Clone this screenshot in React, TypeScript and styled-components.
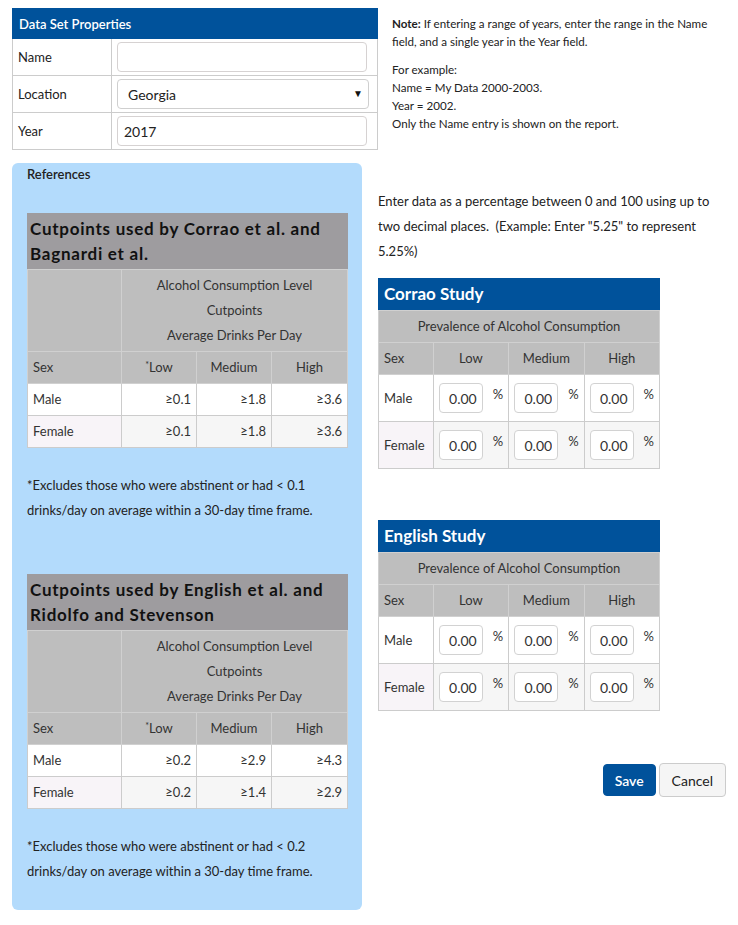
import React from "react";
import styled, { createGlobalStyle } from "styled-components";

const GlobalStyle = createGlobalStyle`
  body {
    margin: 0;
    background: #fff;
    font-family: Lato, "Open Sans", sans-serif;
    color: #222;
  }
`;

const BLUE = "#00529b";
const BORDER = "#cccccc";

const Page = styled.div`
  width: 714px;
  padding: 8px 12px 17px;
`;

const TopRow = styled.div`
  display: grid;
  grid-template-columns: 366px 1fr;
  gap: 14px;
`;

const BottomRow = styled.div`
  display: grid;
  grid-template-columns: 350px 1fr;
  gap: 16px;
  margin-top: 13px;
  align-items: start;
`;

const PropsTable = styled.table`
  width: 366px;
  border-collapse: collapse;
  font-size: 13px;
  th {
    background: ${BLUE};
    color: #fff;
    text-align: left;
    font-weight: 600;
    height: 29px;
    padding: 0 6px;
    border: 1px solid ${BLUE};
  }
  td {
    border: 1px solid ${BORDER};
    height: 36px;
    padding: 0 5px;
  }
  td:first-child {
    width: 88px;
  }
`;

const TextField = styled.input`
  box-sizing: border-box;
  width: 250px;
  height: 30px;
  border: 1px solid #d6d2d2;
  border-radius: 4px;
  padding: 0 6px;
  font: 14px Lato, sans-serif;
  color: #222;
  outline: none;
`;

const SelectWrap = styled.div`
  position: relative;
  width: 252px;
`;

const Select = styled.select`
  box-sizing: border-box;
  width: 252px;
  height: 30px;
  border: 1px solid #cfcfcf;
  border-radius: 4px;
  padding: 0 10px;
  font: 14px Lato, sans-serif;
  color: #222;
  background: #fff;
  appearance: none;
  -webkit-appearance: none;
`;

const Arrow = styled.span`
  position: absolute;
  right: 6px;
  top: 8px;
  font-size: 10px;
  color: #111;
  pointer-events: none;
`;

const Note = styled.div`
  padding-top: 7px;
  font-size: 11.6px;
  line-height: 18px;
  color: #222;
  p {
    margin: 0 0 10px;
  }
  b {
    font-weight: 700;
  }
`;

const RefPanel = styled.div`
  background: #b3dbfc;
  border-radius: 6px;
  padding: 3px 15px 26px;
`;

const PanelTitle = styled.div`
  font-size: 13px;
  font-weight: 600;
  line-height: 16px;
  margin-bottom: 31px;
`;

const CutTable = styled.table`
  width: 320px;
  table-layout: fixed;
  border-collapse: collapse;
  font-size: 13px;
  color: #333;
  caption {
    background: #9e9c9f;
    color: #111;
    text-align: left;
    font-size: 17px;
    font-weight: 700;
    letter-spacing: 0.75px;
    line-height: 25px;
    padding: 3px 3px;
  }
  th {
    background: #bebebe;
    font-weight: 400;
    border: 1px solid #d0d0d0;
    line-height: 25px;
    padding: 3px 5px;
  }
  td {
    border: 1px solid ${BORDER};
    line-height: 25px;
    padding: 3px 5px;
    text-align: right;
    background: #fff;
  }
  td:first-child {
    text-align: left;
  }
  tr.alt td {
    background: #f6f6f6;
  }
  tr.alt td:first-child {
    background: #f8f4f8;
  }
`;

const Star = styled.span`
  font-size: 9px;
  line-height: 0;
  vertical-align: 4px;
`;

const Footnote = styled.p`
  font-size: 13px;
  line-height: 25px;
  margin: 25px 0 0;
  color: #222;
`;

const Spacer = styled.div`
  height: 51px;
`;

const RightCol = styled.div`
  padding-top: 26px;
  display: flex;
  flex-direction: column;
`;

const Intro = styled.p`
  font-size: 13px;
  line-height: 25px;
  margin: 0 0 14px;
`;

const StudyTable = styled.table<{ $gap?: number }>`
  width: 282px;
  border-collapse: collapse;
  font-size: 13px;
  color: #333;
  margin-bottom: ${(p) => p.$gap ?? 0}px;
  caption {
    background: ${BLUE};
    color: #fff;
    text-align: left;
    font-size: 17px;
    font-weight: 700;
    line-height: 26px;
    padding: 3px 6px;
  }
  th {
    background: #bebebe;
    font-weight: 400;
    border: 1px solid #d0d0d0;
    line-height: 25px;
    padding: 3px 5px;
  }
  th.left {
    text-align: left;
  }
  td {
    border: 1px solid ${BORDER};
    padding: 3px 5px;
    height: 40px;
    background: #fff;
  }
  td:first-child {
    width: 45px;
  }
  tr.alt td {
    background: #f6f6f6;
  }
  tr.alt td:first-child {
    background: #f8f4f8;
  }
`;

const PctCell = styled.div`
  display: flex;
  align-items: flex-start;
  gap: 10px;
`;

const PctInput = styled.input`
  box-sizing: border-box;
  width: 44px;
  height: 30px;
  border: 1px solid #d2d2d2;
  border-radius: 4px;
  text-align: right;
  padding: 0 5px;
  font: 14px Lato, sans-serif;
  color: #333;
  background: #fff;
`;

const Pct = styled.span`
  font-size: 13px;
  line-height: 20px;
  padding-top: 1px;
`;

const Actions = styled.div`
  display: flex;
  justify-content: flex-end;
  gap: 3px;
  align-items: center;
`;

const Btn = styled.button<{ $primary?: boolean }>`
  height: ${(p) => (p.$primary ? 32 : 34)}px;
  padding: 0 ${(p) => (p.$primary ? 11 : 12)}px;
  border-radius: 4px;
  font: ${(p) => (p.$primary ? 600 : 400)} 14px Lato, sans-serif;
  color: ${(p) => (p.$primary ? "#fff" : "#222")};
  background: ${(p) => (p.$primary ? BLUE : "#f5f5f5")};
  border: 1px solid ${(p) => (p.$primary ? BLUE : "#cccccc")};
`;

type Cut = { sex: string; low: string; med: string; high: string };

const CutpointTable = ({ title, rows }: { title: string; rows: Cut[] }) => (
  <CutTable>
    <caption>{title}</caption>
    <colgroup>
      <col style={{ width: 94 }} />
      <col style={{ width: 75 }} />
      <col style={{ width: 75 }} />
      <col style={{ width: 76 }} />
    </colgroup>
    <tbody>
      <tr>
        <th />
        <th colSpan={3}>
          Alcohol Consumption Level
          <br />
          Cutpoints
          <br />
          Average Drinks Per Day
        </th>
      </tr>
      <tr>
        <th style={{ textAlign: "left" }}>Sex</th>
        <th>
          <Star>*</Star>Low
        </th>
        <th>Medium</th>
        <th>High</th>
      </tr>
      {rows.map((r, i) => (
        <tr key={r.sex} className={i % 2 ? "alt" : ""}>
          <td>{r.sex}</td>
          <td>≥{r.low}</td>
          <td>≥{r.med}</td>
          <td>≥{r.high}</td>
        </tr>
      ))}
    </tbody>
  </CutTable>
);

const Study = ({ title, gap }: { title: string; gap?: number }) => (
  <StudyTable $gap={gap}>
    <caption>{title}</caption>
    <tbody>
      <tr>
        <th colSpan={4}>Prevalence of Alcohol Consumption</th>
      </tr>
      <tr>
        <th className="left">Sex</th>
        <th>Low</th>
        <th>Medium</th>
        <th>High</th>
      </tr>
      {["Male", "Female"].map((sex, i) => (
        <tr key={sex} className={i % 2 ? "alt" : ""}>
          <td>{sex}</td>
          {[0, 1, 2].map((c) => (
            <td key={c}>
              <PctCell>
                <PctInput defaultValue="0.00" />
                <Pct>%</Pct>
              </PctCell>
            </td>
          ))}
        </tr>
      ))}
    </tbody>
  </StudyTable>
);

export default function App() {
  return (
    <>
      <GlobalStyle />
      <Page>
        <TopRow>
          <PropsTable>
            <thead>
              <tr>
                <th colSpan={2}>Data Set Properties</th>
              </tr>
            </thead>
            <tbody>
              <tr>
                <td>Name</td>
                <td>
                  <TextField />
                </td>
              </tr>
              <tr>
                <td>Location</td>
                <td>
                  <SelectWrap>
                    <Select defaultValue="Georgia">
                      <option>Georgia</option>
                    </Select>
                    <Arrow>▼</Arrow>
                  </SelectWrap>
                </td>
              </tr>
              <tr>
                <td>Year</td>
                <td>
                  <TextField defaultValue="2017" />
                </td>
              </tr>
            </tbody>
          </PropsTable>
          <Note>
            <p>
              <b>Note:</b> If entering a range of years, enter the range in the Name field, and a
              single year in the Year field.
            </p>
            <p>
              For example:
              <br />
              Name = My Data 2000-2003.
              <br />
              Year = 2002.
              <br />
              Only the Name entry is shown on the report.
            </p>
          </Note>
        </TopRow>

        <BottomRow>
          <RefPanel>
            <PanelTitle>References</PanelTitle>
            <CutpointTable
              title="Cutpoints used by Corrao et al. and Bagnardi et al."
              rows={[
                { sex: "Male", low: "0.1", med: "1.8", high: "3.6" },
                { sex: "Female", low: "0.1", med: "1.8", high: "3.6" },
              ]}
            />
            <Footnote>
              *Excludes those who were abstinent or had &lt; 0.1 drinks/day on average within a
              30-day time frame.
            </Footnote>
            <Spacer />
            <CutpointTable
              title="Cutpoints used by English et al. and Ridolfo and Stevenson"
              rows={[
                { sex: "Male", low: "0.2", med: "2.9", high: "4.3" },
                { sex: "Female", low: "0.2", med: "1.4", high: "2.9" },
              ]}
            />
            <Footnote>
              *Excludes those who were abstinent or had &lt; 0.2 drinks/day on average within a
              30-day time frame.
            </Footnote>
          </RefPanel>

          <RightCol>
            <Intro>
              Enter data as a percentage between 0 and 100 using up to two decimal places.&nbsp;
              (Example: Enter "5.25" to represent 5.25%)
            </Intro>
            <Study title="Corrao Study" gap={51} />
            <Study title="English Study" gap={52} />
            <Actions>
              <Btn $primary>Save</Btn>
              <Btn>Cancel</Btn>
            </Actions>
          </RightCol>
        </BottomRow>
      </Page>
    </>
  );
}
